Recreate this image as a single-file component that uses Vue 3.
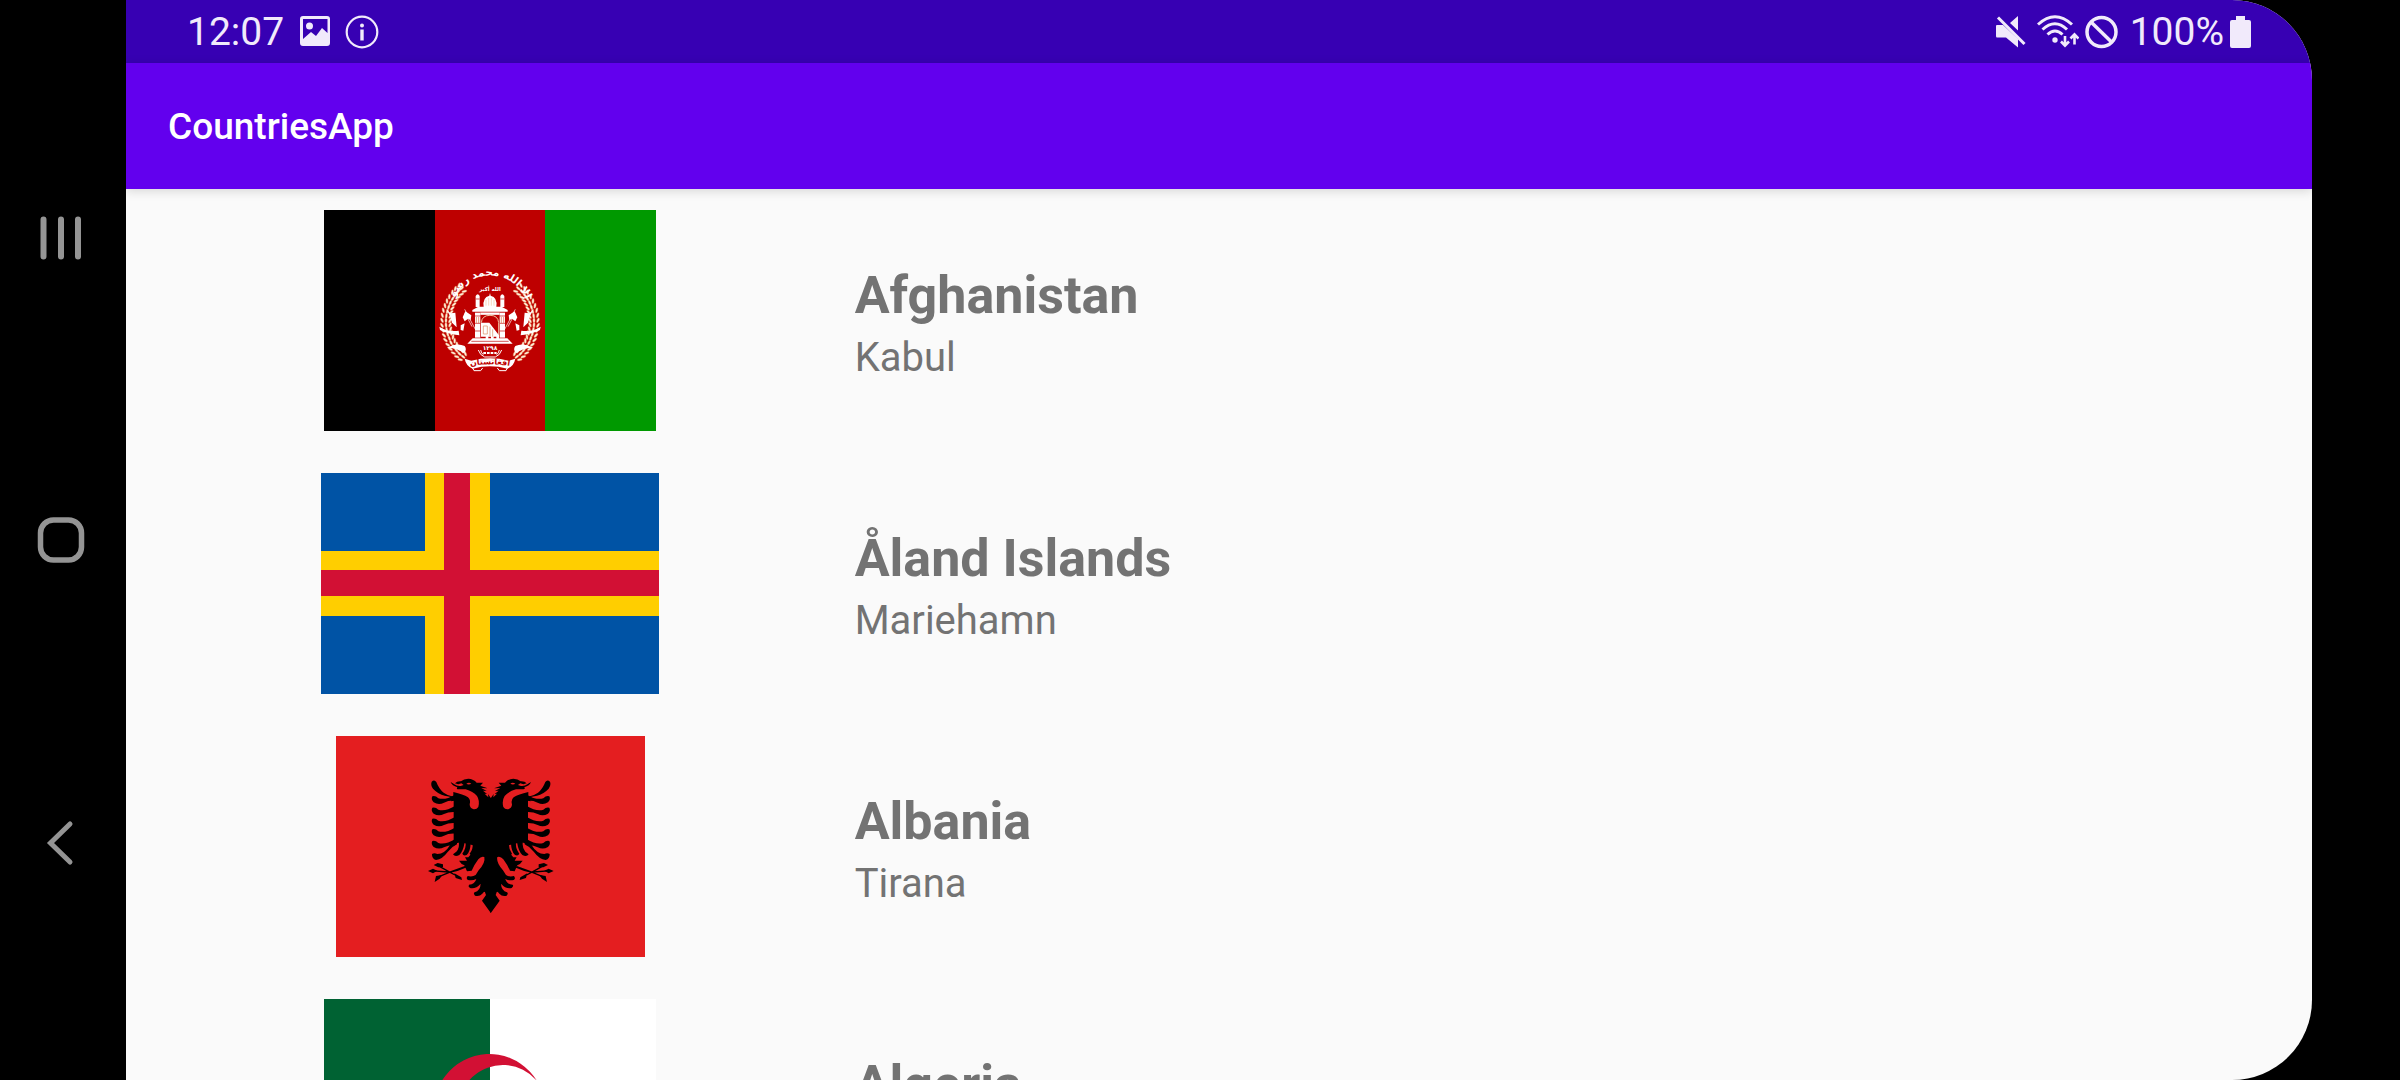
<script setup>
const countries = [
  { code: 'af', name: 'Afghanistan', capital: 'Kabul', width: 332 },
  { code: 'ax', name: 'Åland Islands', capital: 'Mariehamn', width: 338 },
  { code: 'al', name: 'Albania', capital: 'Tirana', width: 309 },
  { code: 'dz', name: 'Algeria', capital: 'Algiers', width: 332 },
]

// Wheat kernels of the Afghan wreath: three rows along the left arc.
const kernels = []
for (let a = 128; a <= 232; a += 6) {
  for (const [r, tilt] of [[144, -28], [132, 0], [120, 28]]) {
    const t = (a * Math.PI) / 180
    kernels.push({
      x: Math.round(180 + r * Math.cos(t)),
      y: Math.round(186 + r * Math.sin(t)),
      turn: a + tilt,
    })
  }
}
</script>

<template>
  <div class="device">
    <nav class="keys" aria-label="System navigation">
      <button type="button" aria-label="Recent apps">
        <svg width="48" height="48" viewBox="0 0 48 48" stroke="#949494" stroke-width="6" stroke-linecap="round">
          <path d="M6.500 5.500v37M24 5.500v37M41 5.500v37" />
        </svg>
      </button>
      <button type="button" aria-label="Home">
        <svg width="48" height="48" viewBox="0 0 48 48" fill="none" stroke="#949494" stroke-width="5.500">
          <rect x="3.500" y="4" width="41" height="40" rx="13" />
        </svg>
      </button>
      <button type="button" aria-label="Back">
        <svg width="48" height="48" viewBox="0 0 48 48" fill="none" stroke="#949494" stroke-width="5" stroke-linecap="round">
          <path d="M33 6L13.500 25L33 44" />
        </svg>
      </button>
    </nav>

    <div class="screen">
      <div class="status">
        <div class="status-side">
          <time>12:07</time>
          <svg class="gap-photo" width="32" height="34" viewBox="0 0 32 34">
            <path fill="currentColor" fill-rule="evenodd" d="M4 1H28Q31 1 31 4V28Q31 31 28 31H4Q1 31 1 28V4Q1 1 4 1ZM4 4V24L12 17L17 21L23 13L28.500 18V4ZM10.500 7.500a3.500 3.500 0 1 1 0 7a3.500 3.500 0 1 1 0-7Z" />
          </svg>
          <svg class="gap-info" width="34" height="34" viewBox="0 0 34 34">
            <circle cx="17" cy="17" r="15.300" fill="none" stroke="currentColor" stroke-width="2.200" />
            <circle cx="17" cy="10.500" r="2" fill="currentColor" />
            <path d="M17 14.500v11" stroke="currentColor" stroke-width="3.400" />
          </svg>
        </div>
        <div class="status-side">
          <svg width="31" height="34" viewBox="0 0 31 34">
            <path fill="currentColor" d="M2 10H8L23 24V32.500L11 22.500H2Q1 22.500 1 21V11Q1 10 2 10ZM15 8L23 1V15.500Z" />
            <path d="M3 2.500L29.500 29" stroke="currentColor" stroke-width="3" />
          </svg>
          <svg class="gap-wifi" width="42" height="34" viewBox="0 0 42 34" fill="none" stroke="currentColor" stroke-width="3">
            <path d="M1 9.500Q18-6 35 9.500M5.500 14.500Q18 3 30 14.500M10.500 19.500Q18 12.500 25.500 19.500" />
            <circle cx="18" cy="25" r="2.700" fill="currentColor" stroke="none" />
            <path stroke-width="2.600" d="M28 21v9.500M24 26.500l4 4.200l4-4.200M37.500 29.500v-10M33.500 23.500l4-4.200l4 4.200" />
          </svg>
          <svg class="gap-ban" width="33" height="34" viewBox="0 0 33 34" fill="none" stroke="currentColor" stroke-width="3.500">
            <circle cx="16.500" cy="17" r="14.500" />
            <path d="M6 7L27 27.500" />
          </svg>
          <span class="gap-battery-text">100%</span>
          <svg class="gap-battery" width="21" height="34" viewBox="0 0 21 34">
            <path fill="currentColor" d="M6 1h9v4h4q2 0 2 2v24q0 2-2 2h-17q-2 0-2-2v-24q0-2 2-2h4z" />
          </svg>
        </div>
      </div>

      <header class="appbar"><h1>CountriesApp</h1></header>

      <main class="content">
        <ul class="list">
          <li v-for="c in countries" :key="c.code" class="row">
            <svg
              class="flag"
              role="img"
              :aria-label="`Flag of ${c.name}`"
              :width="c.width"
              height="221"
              :viewBox="`0 0 ${c.width} 221`"
            >
              <template v-if="c.code === 'af'">
                <path fill="#be0000" d="M100 0h130v221H100z" />
                <path fill="#000" d="M0 0h111v221H0z" />
                <path fill="#009900" d="M221 0H332v221H221z" />
                <g transform="translate(106 50) scale(.3333)">
                  <defs>
                    <path id="creed-arc" d="M70 122A118 118 0 0 1 290 122" />
                    <path id="name-arc" d="M122 318Q180 308 238 318" />
                    <g id="wreath-half">
                      <ellipse
                        v-for="(k, i) in kernels"
                        :key="i"
                        rx="3.500"
                        ry="8"
                        :transform="`translate(${k.x} ${k.y}) rotate(${k.turn})`"
                        fill="#fff0dc"
                        stroke="#d96b3a"
                        stroke-width="1.200"
                      />
                      <path fill="#fff" d="M49 148L62 160L76 158L80 202L66 188L60 168ZM28 200Q50 216 86 212L88 226Q52 222 30 210ZM50 264Q80 246 104 258Q112 268 102 280Q78 262 50 264Z" />
                      <path d="M104 148L136 208M105 160L126 200" stroke="#fff" stroke-width="2" />
                      <path fill="#fff" d="M106 154L124 166L122 180L114 176L104 184L98 172ZM92 196L104 190L100 212L92 210Z" />
                      <path fill="#fff" d="M137 108Q143 98 149 108V141H137Z" />
                      <path fill="#fff" d="M135 158H151V233H135Z" />
                      <path d="M135 168h16M135 190h16M135 213h16M137 117h12" stroke="#be0000" stroke-width="2" />
                      <path d="M139 171v18M146 171v18" stroke="#d96b3a" stroke-width="2" />
                    </g>
                  </defs>
                  <use href="#wreath-half" />
                  <use href="#wreath-half" transform="translate(360 0) scale(-1 1)" />
                  <path fill="#fff" d="M127 150L145 140H161Q157 112 178 107L180 99L182 107Q203 112 199 140H215L233 150V155H127Z" />
                  <path d="M168 137V120M176 137V114M184 137V114M192 137V120" stroke="#f1c4a0" stroke-width="2" />
                  <path d="M151 161H209" stroke="#fff" stroke-width="7" />
                  <path d="M154 188Q156 166 180 166Q204 166 206 188V232" fill="none" stroke="#f1c4a0" stroke-width="3" />
                  <path fill="#fff" d="M153 188H178L207 226V238H199V230H191V238H183V230H175V238H167V230H153Z" />
                  <path d="M160 198h12v24h-12zM180 200v28M188 208v22" stroke="#d98a5c" stroke-width="2" fill="none" />
                  <path fill="#fff" d="M128 235H232L248 251H112Z" />
                  <path d="M124 244H236" stroke="#be0000" stroke-width="2" />
                  <path d="M145 270Q150 286 164 291H196Q210 286 215 270M152 270Q154 280 160 284M208 270Q206 280 200 284" fill="none" stroke="#fff" stroke-width="3" />
                  <path d="M160 279H200" stroke="#fff" stroke-width="6" stroke-dasharray="8 3" />
                  <path fill="#fff" d="M124 302Q180 288 236 302L256 296Q252 318 232 326Q180 312 128 326Q108 318 104 296Z" />
                  <path d="M128 324L132 332H152L158 324M232 324L228 332H208L202 324" fill="none" stroke="#fff" stroke-width="3" />
                  <g class="script">
                    <text font-size="31" fill="#fff"><textPath href="#creed-arc" startOffset="50%">لا إله إلا الله محمد رسول الله</textPath></text>
                    <text x="180" y="92" font-size="16" fill="#fff">الله أكبر</text>
                    <text x="180" y="271" font-size="18" fill="#fff">١٢٩٨</text>
                    <text font-size="24" fill="#be0000"><textPath href="#name-arc" startOffset="50%">افغانستان</textPath></text>
                  </g>
                </g>
              </template>

              <template v-else-if="c.code === 'ax'">
                <path fill="#0053a5" d="M0 0h338v221H0z" />
                <path fill="#ffce00" d="M104 0h65v221h-65zM0 78h338v65H0z" />
                <path fill="#d21034" d="M123 0h26v221h-26zM0 97h338v26H0z" />
              </template>

              <template v-else-if="c.code === 'al'">
                <path fill="#e41e20" d="M0 0h309v221H0z" />
                <defs>
                  <g id="eagle-half">
                    <path d="M241 116L231 102L232 112L221 101L228 102L216 92L227 93L211 84L230 85L208 77L216 68L197 68Q188 57 172 56Q158 57 150 64Q138 63 132 70L142 73L151 70L158 75L149 78Q137 79 130 73L119 66Q123 77 139 82Q135 88 142 88L164 88Q186 94 198 108Q207 122 202 141Q197 149 188 148Q176 145 176 133Q180 120 171 112Q157 103 127 96V110Q112 108 98 98Q84 87 76 66Q70 57 62 65Q58 75 66 86Q82 103 101 107L124 112L120 124L128 122V252L148 247L172 252L194 258L188 273L172 292L162 292L168 302L144 302Q150 312 160 316L168 334L182 332Q190 314 202 298Q211 287 220 291Q224 308 203 331L194 345Q184 352 170 348Q164 356 171 360Q184 363 196 357Q192 373 174 374Q170 379 177 384Q194 388 209 371Q208 392 191 397Q186 400 192 407Q205 411 214 401Q222 390 223 400L225 405L213 422L240 460Z" />
                    <path
                      v-for="y in [118, 152, 185, 217, 252]"
                      :key="y"
                      :transform="`translate(0 ${y})`"
                      d="M64-9Q73-12 82-3Q103 3 132-14V4Q112 3 99 10Q83 18 68 9Q59 0 64-9Z"
                    />
                    <path d="M63 282Q70 277 79 282Q101 282 118 254Q126 240 138 232V253Q122 260 110 276Q94 298 75 300Q62 296 63 282Z" />
                    <path d="M143 243Q147 263 136 275L126 283Q132 292 145 285Q156 276 161 247ZM164 247Q166 266 154 281Q157 289 167 285Q178 276 179 250ZM185 248Q187 267 176 281Q179 288 187 283Q195 270 197 249Z" />
                    <path d="M165 321Q140 333 115 337L82 351M132 345Q110 333 80 316M112 336L58 332M162 320L110 339" fill="none" stroke="#000" stroke-width="4" />
                    <path d="M68 315L80 309L96 313L96 321L82 322ZM51 333L66 326L79 332L66 340ZM71 366L75 348L94 345L86 356ZM130 340L151 352L153 360L134 354Z" />
                    <path d="M166 71Q174 65 181 71Q173 76 166 71Z" fill="#e41e20" />
                  </g>
                </defs>
                <g transform="translate(75 24) scale(.3333)">
                  <use href="#eagle-half" />
                  <use href="#eagle-half" transform="translate(479 0) scale(-1 1)" />
                </g>
              </template>

              <template v-else>
                <path fill="#006233" d="M0 0h166v221H0z" />
                <path fill="#fff" d="M166 0h166v221H166z" />
                <path fill="#d21034" d="M213 82A55.500 55.500 0 1 0 213 139A44.500 44.500 0 1 1 213 82Z" />
                <path fill="#d21034" d="M168 110.500L218 94L187 137V84L218 127Z" />
              </template>
            </svg>

            <div class="info">
              <h2>{{ c.name }}</h2>
              <p>{{ c.capital }}</p>
            </div>
          </li>
        </ul>
      </main>
    </div>
  </div>
</template>

<style>
body {
  margin: 0;
  background: #000;
}
</style>

<style scoped>
.device {
  display: flex;
  height: 100vh;
  padding-right: 88px;
  overflow: hidden;
  box-sizing: border-box;
  background: #000;
  font-family: Roboto, "Noto Sans", sans-serif;
}

.keys {
  flex: 0 0 126px;
  display: flex;
  flex-direction: column;
  justify-content: space-evenly;
  box-sizing: border-box;
  padding-right: 5px;
}

.keys button {
  display: flex;
  align-items: center;
  justify-content: center;
  height: 128px;
  padding: 0;
  border: 0;
  background: none;
}

.screen {
  flex: 1;
  min-width: 0;
  display: flex;
  flex-direction: column;
  overflow: hidden;
  border-radius: 0 80px 80px 0;
  background: #fafafa;
}

.status {
  flex: 0 0 63px;
  display: flex;
  justify-content: space-between;
  box-sizing: border-box;
  padding: 0 61px;
  background: #3700b3;
  color: #f1eafb;
  font-size: 39px;
  line-height: 62px;
}

.status-side {
  display: flex;
  align-items: center;
}

.gap-photo {
  margin-left: 15px;
}

.gap-info {
  margin-left: 14px;
}

.gap-wifi {
  margin-left: 11px;
}

.gap-ban {
  margin-left: 6px;
}

.gap-battery-text {
  margin-left: 12px;
}

.gap-battery {
  margin-left: 6px;
}

.appbar {
  flex: 0 0 126px;
  display: flex;
  align-items: center;
  padding: 0 42px;
  background: #6200ee;
  box-shadow: 0 2px 10px rgba(0, 0, 0, 0.15);
  color: #fff;
}

.appbar h1 {
  margin: 0;
  font-size: 37px;
  font-weight: 500;
}

.content {
  flex: 1;
  min-height: 0;
}

.list {
  margin: 0;
  padding: 0;
  list-style: none;
}

.row {
  display: grid;
  grid-template-columns: 1fr 2fr;
  align-items: center;
  padding: 21px 0;
}

.flag {
  display: block;
  justify-self: center;
}

.script {
  font-family: "DejaVu Sans", sans-serif;
  font-weight: 700;
  text-anchor: middle;
}

.info {
  padding-top: 2px;
  color: #737373;
}

.info h2 {
  margin: 0;
  font-size: 52px;
  line-height: 72px;
  font-weight: 700;
}

.info p {
  margin: 0;
  font-size: 40px;
  line-height: 52px;
}
</style>
